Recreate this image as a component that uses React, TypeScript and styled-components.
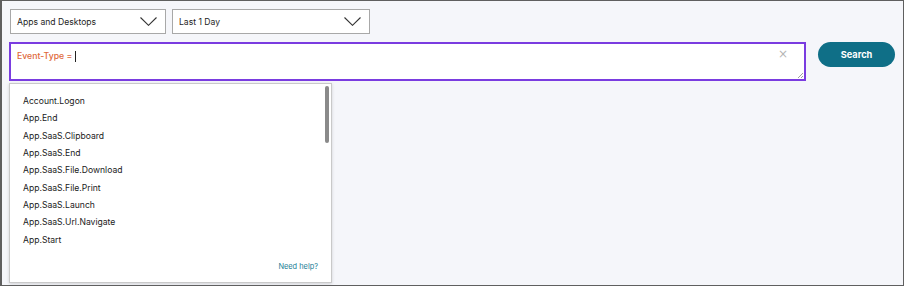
import React from 'react'
import styled, { createGlobalStyle } from 'styled-components'

const GlobalStyle = createGlobalStyle`
    html, body {
        margin: 0;
        padding: 0;
        background: #f5f6fa;
    }
    * {
        box-sizing: border-box;
    }
`

const Frame = styled.div`
    width: 904px;
    height: 286px;
    background: #f5f6fa;
    border: 1px solid #5f5f5f;
    border-left-width: 2px;
    padding: 8px 8px 0 7px;
    font-family: Inter, "Open Sans", sans-serif;
    color: #1e1e1e;
    overflow: hidden;
`

const Filters = styled.div`
    display: flex;
    gap: 6px;
    padding-left: 1px;
`

const Select = styled.div<{ $width: number }>`
    width: ${props => props.$width}px;
    height: 25px;
    background: #fff;
    border: 1px solid #a8a8a8;
    display: flex;
    align-items: center;
    justify-content: space-between;
    padding: 0 8px 0 6px;
    font-size: 8.6px;
`

const QueryRow = styled.div`
    display: flex;
    align-items: flex-start;
    gap: 12px;
    margin-top: 8px;
`

const QueryWrap = styled.div`
    position: relative;
    width: 797px;
`

const QueryBox = styled.div`
    position: relative;
    height: 39px;
    background: #fff;
    border: 2px solid #7a3ce0;
    padding: 6px 6px;
    font-size: 8.7px;
    display: flex;
    align-items: flex-start;
    white-space: pre;
`

const Line = styled.div`
    display: flex;
    align-items: center;
    height: 12px;
`

const Keyword = styled.span`
    color: #e0683a;
    font-weight: 500;
`

const Caret = styled.span`
    display: inline-block;
    width: 1px;
    height: 11px;
    background: #222;
    margin-left: 3px;
`

const Clear = styled.span`
    position: absolute;
    right: 16px;
    top: 3px;
    color: #b5b5b5;
    font-size: 12px;
    font-family: "DejaVu Sans", sans-serif;
`

const Grip = styled.svg`
    position: absolute;
    right: 0;
    bottom: 0;
`

const Suggestions = styled.div`
    position: absolute;
    left: 0;
    top: 41px;
    width: 323px;
    height: 200px;
    background: #fff;
    border: 1px solid #c9c9c9;
    box-shadow: 0 1px 3px rgba(0, 0, 0, 0.15);
    padding: 9px 0 0 13px;
    display: flex;
    flex-direction: column;
`

const Item = styled.div`
    font-size: 8.6px;
    line-height: 17.35px;
    height: 17.35px;
    color: #1a1a1a;
`

const Scrollbar = styled.div`
    position: absolute;
    right: 2px;
    top: 2px;
    width: 4px;
    height: 57px;
    border-radius: 2px;
    background: #8a8a8a;
`

const Help = styled.a`
    margin-top: auto;
    align-self: flex-end;
    margin-right: 13px;
    margin-bottom: 11px;
    color: #1b7e95;
    font-size: 7.4px;
    text-decoration: none;
`

const SearchButton = styled.button`
    width: 77px;
    height: 25px;
    border: none;
    border-radius: 13px;
    background: #0f6f87;
    color: #fff;
    font-family: Inter, "Open Sans", sans-serif;
    font-size: 9.2px;
    font-weight: 700;
`

function Chevron() {
    return (
        <svg width="17" height="9" viewBox="0 0 17 9">
            <path d="M0.5 0.5 L8.5 8.3 L16.5 0.5" fill="none" stroke="#333" strokeWidth="1.1" />
        </svg>
    )
}

const events = [
    'Account.Logon',
    'App.End',
    'App.SaaS.Clipboard',
    'App.SaaS.End',
    'App.SaaS.File.Download',
    'App.SaaS.File.Print',
    'App.SaaS.Launch',
    'App.SaaS.Url.Navigate',
    'App.Start',
]

export default function App() {
    return (
        <>
            <GlobalStyle />
            <Frame>
                <Filters>
                    <Select $width={156}>
                        <span>Apps and Desktops</span>
                        <Chevron />
                    </Select>
                    <Select $width={198}>
                        <span>Last 1 Day</span>
                        <Chevron />
                    </Select>
                </Filters>
                <QueryRow>
                    <QueryWrap>
                        <QueryBox>
                            <Line>
                                <Keyword>Event-Type =</Keyword>
                                <Caret />
                            </Line>
                            <Clear>×</Clear>
                            <Grip width="7" height="7" viewBox="0 0 7 7">
                                <path d="M6 1 L1 6 M6 4 L4 6" stroke="#888" strokeWidth="0.8" />
                            </Grip>
                        </QueryBox>
                        <Suggestions>
                            {events.map(e => (
                                <Item key={e}>{e}</Item>
                            ))}
                            <Help href="#">Need help?</Help>
                            <Scrollbar />
                        </Suggestions>
                    </QueryWrap>
                    <SearchButton>Search</SearchButton>
                </QueryRow>
            </Frame>
        </>
    )
}
